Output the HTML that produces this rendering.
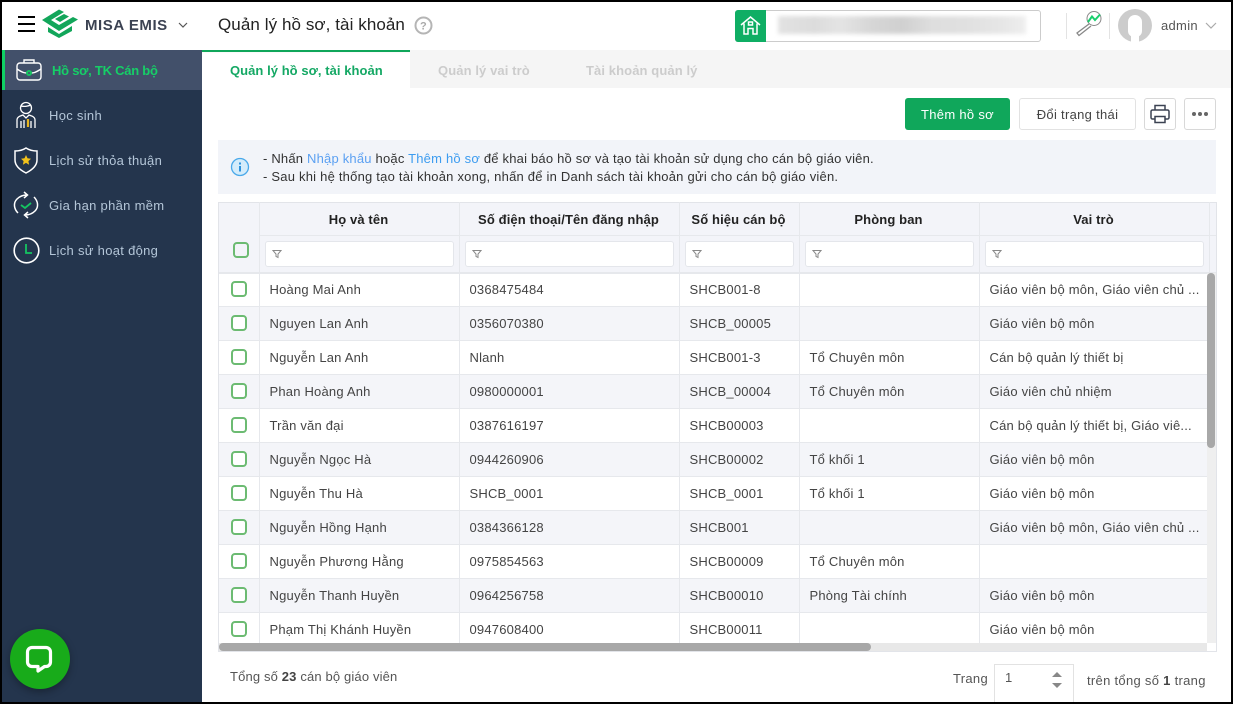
<!DOCTYPE html>
<html lang="vi"><head><meta charset="utf-8"><title>Quản lý hồ sơ, tài khoản</title>
<style>
*{box-sizing:border-box}
html,body{margin:0;padding:0}
body{width:1233px;height:704px;overflow:hidden;background:#000;position:relative;font:13px/18px "Liberation Sans","Noto Sans CJK SC",sans-serif;letter-spacing:.3px;color:#333}
.a{position:absolute;white-space:nowrap}
.m{position:absolute;left:49px;color:#b4c6d8;white-space:nowrap}
.h{position:absolute;top:211px;text-align:center;font-weight:bold;color:#222;font-size:13px;letter-spacing:.12px}
.in{position:absolute;top:241px;height:26px;background:#fff;border:1px solid #e4e6eb;border-radius:3px}
.in svg{position:absolute;left:6px;top:7px}
.v{position:absolute;top:202px;width:1px;height:449px;background:#e6e8ec}
.r{position:absolute;left:219px;width:988px;height:34px;border-bottom:1px solid #e6e8ec}
.r.e{background:#f4f5f9}
.r span{position:absolute;top:8px;white-space:nowrap;color:#444;letter-spacing:.2px}
.c1{left:50.500px}.c2{left:250.500px}.c3{left:470.500px}.c4{left:590.500px}.c5{left:770.500px}
.r i{position:absolute;left:12px;top:8px;width:16px;height:16px;border:2px solid #6cbb72;border-radius:4px;background:#fff}
</style></head><body>
<div style="position:absolute;left:2px;top:2px;width:1229px;height:700px;background:#fff"></div>

<!-- header -->
<div style="position:absolute;left:2px;top:2px;width:1229px;height:48px;background:#fff;box-shadow:0 1px 3px rgba(0,0,0,.14)"></div>
<div style="position:absolute;left:18px;top:16px;width:17px;height:2px;background:#000"></div>
<div style="position:absolute;left:18px;top:23px;width:17px;height:2px;background:#000"></div>
<div style="position:absolute;left:18px;top:30px;width:17px;height:2px;background:#000"></div>
<svg class="a" style="left:41px;top:9px" width="38" height="30" viewBox="0 0 38 30"><path d="M1 11 L18 .5 L23 3 L10 11 L18 16 L32 8 L37 10.500 L18 22 Z M14 10 L23 5 L28 7.500 L19 13 Z" fill="#12a65a"/><path d="M7 18 L18 25 L31 17 V22 L18 29 L7 23Z" fill="#12a65a"/></svg>
<div class="a" style="left:85px;top:17px;font-size:15px;font-weight:bold;color:#3b4252;letter-spacing:.55px">MISA EMIS</div>
<svg class="a" style="left:178px;top:22px" width="10" height="6"><path d="M1 1l4 4 4-4" fill="none" stroke="#555" stroke-width="1.200"/></svg>
<div class="a" style="left:218px;top:14px;font-size:17px;line-height:22px;color:#222;letter-spacing:.08px">Quản lý hồ sơ, tài khoản</div>
<svg class="a" style="left:414px;top:16px" width="19" height="19"><circle cx="9.500" cy="9.500" r="8" fill="none" stroke="#b5b5b5" stroke-width="2"/><text x="9.500" y="13.500" text-anchor="middle" font-size="11" font-weight="bold" fill="#aaa" font-family="Liberation Sans">?</text></svg>

<div style="position:absolute;left:735px;top:10px;width:306px;height:32px;border:1px solid #ccc;border-radius:3px;background:#fff"></div>
<div style="position:absolute;left:735px;top:10px;width:31px;height:32px;background:#0fae64;border-radius:3px 0 0 3px"></div>
<svg class="a" style="left:740px;top:15px" width="21" height="21" fill="none" stroke="#fff" stroke-width="1.500"><path d="M1 10 L10.500 2 L20 10 M4 8.500 V19 H8 V13.500 H13 V19 H17 V8.500"/><rect x="8.500" y="7" width="4" height="3"/></svg>
<div style="position:absolute;left:778px;top:16px;width:248px;height:18px;background:linear-gradient(90deg,#e2e2e2,#dcdcdc 15%,#e4e4e4 25%,#d6d6d6 38%,#d0d0d0 50%,#dedede 62%,#e0e0e0 75%,#e6e6e6 90%,#eee);filter:blur(2px)"></div>

<div style="position:absolute;left:1066px;top:13px;width:1px;height:26px;background:#e3e3e3"></div>
<div style="position:absolute;left:1109px;top:13px;width:1px;height:26px;background:#e3e3e3"></div>
<svg class="a" style="left:1074px;top:11px" width="28" height="27" fill="none"><circle cx="20" cy="7.500" r="7" stroke="#888" stroke-width="1"/><path d="M14 11 L18 5.500 L21 9 L26 3.500" stroke="#18cf6d" stroke-width="2"/><path d="M15 13 L3 22 L5 24.500 L17 15" stroke="#888" stroke-width="1.300"/></svg>
<div style="position:absolute;left:1118px;top:9px;width:34px;height:33px;border-radius:50%;background:#ccc"></div>
<div style="position:absolute;left:1128px;top:15px;width:14px;height:22px;border-radius:7px 7px 6px 6px;background:#fff"></div>
<div style="position:absolute;left:1131px;top:34px;width:8px;height:8px;background:#fff"></div>
<div class="a" style="left:1161px;top:17px;color:#555">admin</div>
<svg class="a" style="left:1205px;top:22px" width="12" height="7"><path d="M1 1l5 5 5-5" fill="none" stroke="#aaa" stroke-width="1.200"/></svg>

<!-- sidebar -->
<div style="position:absolute;left:2px;top:50px;width:200px;height:652px;background:#24354d"></div>
<div style="position:absolute;left:2px;top:50px;width:200px;height:40px;background:#42506a"></div>
<div style="position:absolute;left:2px;top:50px;width:3px;height:40px;background:#0fd264"></div>
<svg class="a" style="left:15px;top:58px" width="28" height="24" fill="none" stroke="#fff" stroke-width="1.400"><rect x="2" y="5" width="24" height="17" rx="3"/><path d="M9 5V2h10v3M2 11c6 4 8 4 10 4M26 11c-6 4-8 4-10 4"/><circle cx="14" cy="15" r="2" stroke="#15c561" stroke-width="2"/></svg>
<div class="m" style="left:52px;top:62px;color:#16cf67;font-weight:bold;letter-spacing:-.25px">Hồ sơ, TK Cán bộ</div>

<svg class="a" style="left:15px;top:101px" width="22" height="28" fill="none" stroke="#fff" stroke-width="1.300"><circle cx="11" cy="7" r="5.500"/><path d="M6 5c4 1 7 0 10-1M2 27V19c0-3 3-4 6-5l3 3 3-3c3 1 6 2 6 5v8M6 20v7M16 20v7M9 19v8"/><path d="M13 18v8" stroke="#e6b31e" stroke-width="2.200"/></svg>
<div class="m" style="top:107px">Học sinh</div>

<svg class="a" style="left:13px;top:146px" width="26" height="28"><path d="M13 2 C10 4 6 5 2 5 V14 C2 20 7 24 13 27 C19 24 24 20 24 14 V5 C20 5 16 4 13 2Z" fill="none" stroke="#fff" stroke-width="1.500"/><path d="M13 9l1.500 3.300 3.500.4-2.600 2.400.7 3.600-3.100-1.800-3.100 1.800.7-3.600-2.600-2.400 3.500-.4z" fill="#f2c21b"/></svg>
<div class="m" style="top:152px">Lịch sử thỏa thuận</div>

<svg class="a" style="left:13px;top:191px" width="26" height="28" fill="none" stroke="#fff" stroke-width="1.500"><path d="M5 22C1 18 0 12 4 8 7 5 10 4 14 4M11 1l3.500 3L11 7"/><path d="M21 6c4 4 5 10 1 14-3 3-6 4-10 4M15 27l-3.500-3L15 21"/><path d="M8 14l4 3 6-5" stroke="#15c561" stroke-width="1.800"/></svg>
<div class="m" style="top:197px">Gia hạn phần mềm</div>

<svg class="a" style="left:13px;top:237px" width="27" height="27" fill="none"><circle cx="13.500" cy="13.500" r="12.300" stroke="#fff" stroke-width="1.600"/><path d="M13 7v9h6" stroke="#15c561" stroke-width="1.800"/></svg>
<div class="m" style="top:242px">Lịch sử hoạt động</div>

<div style="position:absolute;left:10px;top:629px;width:60px;height:60px;border-radius:50%;background:#18ab1a;box-shadow:0 3px 8px rgba(0,0,0,.3)"></div>
<svg class="a" style="left:25px;top:645px" width="30" height="30"><path d="M7 2.500H21A4.500 4.500 0 0 1 25.500 7V17A4.500 4.500 0 0 1 21 21.500H19.500L13 26V21.500H7A4.500 4.500 0 0 1 2.500 17V7A4.500 4.500 0 0 1 7 2.500Z" fill="none" stroke="#fff" stroke-width="3.200" stroke-linejoin="round"/></svg>

<!-- tabs -->
<div style="position:absolute;left:410px;top:50px;width:821px;height:38px;background:#f5f5f5"></div>
<div style="position:absolute;left:202px;top:50px;width:208px;height:2px;background:#0fa65a"></div>
<div class="a" style="left:230px;top:62px;color:#14a864;font-weight:bold;letter-spacing:.05px">Quản lý hồ sơ, tài khoản</div>
<div class="a" style="left:438px;top:62px;color:#ccc;font-weight:bold;letter-spacing:.1px">Quản lý vai trò</div>
<div class="a" style="left:586px;top:62px;color:#ccc;font-weight:bold;letter-spacing:.1px">Tài khoản quản lý</div>

<!-- toolbar -->
<div class="a" style="left:905px;top:98px;width:105px;height:32px;background:#10a75b;border-radius:3px;color:#fff;text-align:center;line-height:33px">Thêm hồ sơ</div>
<div class="a" style="left:1019px;top:98px;width:117px;height:32px;border:1px solid #e2e2e2;border-radius:3px;color:#444;text-align:center;line-height:31px">Đổi trạng thái</div>
<div class="a" style="left:1144px;top:98px;width:32px;height:32px;border:1px solid #d8d8d8;border-radius:3px"></div>
<svg class="a" style="left:1150px;top:104px" width="20" height="20" fill="none" stroke="#3b4252" stroke-width="1.500"><path d="M5 6V1.500H15V6M5 15H2.500A1.500 1.500 0 0 1 1 13.500V7.500A1.500 1.500 0 0 1 2.500 6H17.500A1.500 1.500 0 0 1 19 7.500V13.500A1.500 1.500 0 0 1 17.500 15H15"/><path d="M5 12.500H15V18.500H5Z"/></svg>
<div class="a" style="left:1184px;top:98px;width:32px;height:32px;border:1px solid #d8d8d8;border-radius:3px"></div>
<div style="position:absolute;left:1192px;top:112px;width:4px;height:4px;border-radius:50%;background:#666"></div>
<div style="position:absolute;left:1198px;top:112px;width:4px;height:4px;border-radius:50%;background:#666"></div>
<div style="position:absolute;left:1204px;top:112px;width:4px;height:4px;border-radius:50%;background:#666"></div>

<!-- info -->
<div style="position:absolute;left:218px;top:140px;width:998px;height:54px;background:#f2f4f9"></div>
<svg class="a" style="left:230px;top:157px" width="20" height="20"><circle cx="10" cy="10" r="8.500" fill="#d4ecfb" stroke="#4aa9ea" stroke-width="1.300"/><rect x="9" y="9" width="2" height="5.500" fill="#2f93dd"/><rect x="9" y="5.500" width="2" height="2" fill="#2f93dd"/></svg>
<div class="a" style="left:263px;top:150px;color:#333;letter-spacing:.2px">- Nhấn <span style="color:#5ba0f2">Nhập khẩu</span> hoặc <span style="color:#3d9cf0">Thêm hồ sơ</span> để khai báo hồ sơ và tạo tài khoản sử dụng cho cán bộ giáo viên.</div>
<div class="a" style="left:263px;top:168px;color:#333;letter-spacing:.22px">- Sau khi hệ thống tạo tài khoản xong, nhấn để in Danh sách tài khoản gửi cho cán bộ giáo viên.</div>

<!-- table -->
<div style="position:absolute;left:218px;top:202px;width:999px;height:450px;border:1px solid #e2e4e9;background:#fff"></div>
<div style="position:absolute;left:219px;top:203px;width:997px;height:69px;background:#f3f4f9"></div>
<div style="position:absolute;left:259px;top:235px;width:957px;height:1px;background:#e6e8ec"></div>
<div style="position:absolute;left:219px;top:272px;width:997px;height:2px;background:#e6e8ec"></div>
<div class="h" style="left:259px;width:199px">Họ và tên</div>
<div class="h" style="left:459px;width:219px">Số điện thoại/Tên đăng nhập</div>
<div class="h" style="left:679px;width:119px">Số hiệu cán bộ</div>
<div class="h" style="left:799px;width:179px">Phòng ban</div>
<div class="h" style="left:979px;width:229px">Vai trò</div>
<div style="position:absolute;left:233px;top:242px;width:16px;height:16px;border:2px solid #6cbb72;border-radius:4px;background:#f3f4f9"></div>
<div class="in" style="left:265px;width:189px"><svg width="10" height="10"><path d="M1 1.500H9L6 5V8.500L4 7.500V5Z" fill="none" stroke="#888"/></svg></div>
<div class="in" style="left:465px;width:209px"><svg width="10" height="10"><path d="M1 1.500H9L6 5V8.500L4 7.500V5Z" fill="none" stroke="#888"/></svg></div>
<div class="in" style="left:685px;width:109px"><svg width="10" height="10"><path d="M1 1.500H9L6 5V8.500L4 7.500V5Z" fill="none" stroke="#888"/></svg></div>
<div class="in" style="left:805px;width:169px"><svg width="10" height="10"><path d="M1 1.500H9L6 5V8.500L4 7.500V5Z" fill="none" stroke="#888"/></svg></div>
<div class="in" style="left:985px;width:219px"><svg width="10" height="10"><path d="M1 1.500H9L6 5V8.500L4 7.500V5Z" fill="none" stroke="#888"/></svg></div>

<div class="r" style="top:273px"><i></i><span class="c1">Hoàng Mai Anh</span><span class="c2">0368475484</span><span class="c3">SHCB001-8</span><span class="c5">Giáo viên bộ môn, Giáo viên chủ ...</span></div>
<div class="r e" style="top:307px"><i></i><span class="c1">Nguyen Lan Anh</span><span class="c2">0356070380</span><span class="c3">SHCB_00005</span><span class="c5">Giáo viên bộ môn</span></div>
<div class="r" style="top:341px"><i></i><span class="c1">Nguyễn Lan Anh</span><span class="c2">Nlanh</span><span class="c3">SHCB001-3</span><span class="c4">Tổ Chuyên môn</span><span class="c5">Cán bộ quản lý thiết bị</span></div>
<div class="r e" style="top:375px"><i></i><span class="c1">Phan Hoàng Anh</span><span class="c2">0980000001</span><span class="c3">SHCB_00004</span><span class="c4">Tổ Chuyên môn</span><span class="c5">Giáo viên chủ nhiệm</span></div>
<div class="r" style="top:409px"><i></i><span class="c1">Trần văn đại</span><span class="c2">0387616197</span><span class="c3">SHCB00003</span><span class="c5">Cán bộ quản lý thiết bị, Giáo viê...</span></div>
<div class="r e" style="top:443px"><i></i><span class="c1">Nguyễn Ngọc Hà</span><span class="c2">0944260906</span><span class="c3">SHCB00002</span><span class="c4">Tổ khối 1</span><span class="c5">Giáo viên bộ môn</span></div>
<div class="r" style="top:477px"><i></i><span class="c1">Nguyễn Thu Hà</span><span class="c2">SHCB_0001</span><span class="c3">SHCB_0001</span><span class="c4">Tổ khối 1</span><span class="c5">Giáo viên bộ môn</span></div>
<div class="r e" style="top:511px"><i></i><span class="c1">Nguyễn Hồng Hạnh</span><span class="c2">0384366128</span><span class="c3">SHCB001</span><span class="c5">Giáo viên bộ môn, Giáo viên chủ ...</span></div>
<div class="r" style="top:545px"><i></i><span class="c1">Nguyễn Phương Hằng</span><span class="c2">0975854563</span><span class="c3">SHCB00009</span><span class="c4">Tổ Chuyên môn</span></div>
<div class="r e" style="top:579px"><i></i><span class="c1">Nguyễn Thanh Huyền</span><span class="c2">0964256758</span><span class="c3">SHCB00010</span><span class="c4">Phòng Tài chính</span><span class="c5">Giáo viên bộ môn</span></div>
<div class="r" style="top:613px;border:0;height:30px"><i></i><span class="c1">Phạm Thị Khánh Huyền</span><span class="c2">0947608400</span><span class="c3">SHCB00011</span><span class="c5">Giáo viên bộ môn</span></div>

<div class="v" style="left:259px"></div>
<div class="v" style="left:459px"></div>
<div class="v" style="left:679px"></div>
<div class="v" style="left:799px"></div>
<div class="v" style="left:979px"></div>
<div class="v" style="left:1209px;height:70px"></div>

<!-- scrollbars -->
<div style="position:absolute;left:1207px;top:273px;width:9px;height:370px;background:#efefef"></div>
<div style="position:absolute;left:1207px;top:273px;width:8px;height:175px;background:#a8a8a8;border-radius:4px"></div>
<div style="position:absolute;left:219px;top:643px;width:988px;height:8px;background:#e8e8e8"></div>
<div style="position:absolute;left:219px;top:643px;width:652px;height:8px;background:#a8a8a8;border-radius:4px"></div>

<!-- footer -->
<div class="a" style="left:230px;top:668px;color:#555;letter-spacing:.15px">Tổng số <b style="color:#444">23</b> cán bộ giáo viên</div>
<div class="a" style="left:953px;top:670px;color:#555">Trang</div>
<div style="position:absolute;left:994px;top:664px;width:80px;height:38px;border:1px solid #e2e2e2;border-bottom:0"></div>
<div class="a" style="left:1005px;top:669px;color:#555">1</div>
<svg class="a" style="left:1051px;top:671px" width="12" height="18"><path d="M1 6L6 1l5 5z" fill="#888"/><path d="M1 12l5 5 5-5z" fill="#888"/></svg>
<div class="a" style="left:1087px;top:672px;color:#555">trên tổng số <b style="color:#444">1</b> trang</div>
</body></html>
